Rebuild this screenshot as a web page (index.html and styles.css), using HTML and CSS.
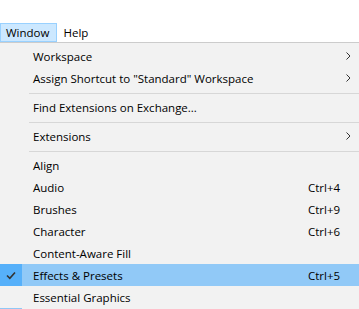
FILE: index.html
```html
<!DOCTYPE html>
<html lang="en">
<head>
  <meta charset="UTF-8" />
  <title>Window menu</title>
  <link rel="stylesheet" href="styles.css">
</head>
<body>
  <div class="menubar">
    <span class="menubar-item active">Window</span>
    <span class="menubar-item">Help</span>
  </div>

  <div class="menu">
    <div class="item"><span class="check"></span><span class="label">Workspace</span><span class="key"></span><span class="arrow"><svg width="5" height="8" viewBox="0 0 5 8"><polyline points="0.5,0.5 4,4 0.5,7.5" fill="none" stroke="#333" stroke-width="1"/></svg></span></div>
    <div class="item"><span class="check"></span><span class="label">Assign Shortcut to "Standard" Workspace</span><span class="key"></span><span class="arrow"><svg width="5" height="8" viewBox="0 0 5 8"><polyline points="0.5,0.5 4,4 0.5,7.5" fill="none" stroke="#333" stroke-width="1"/></svg></span></div>
    <div class="sep"></div>
    <div class="item"><span class="check"></span><span class="label">Find Extensions on Exchange...</span><span class="key"></span><span class="arrow"></span></div>
    <div class="sep"></div>
    <div class="item"><span class="check"></span><span class="label">Extensions</span><span class="key"></span><span class="arrow"><svg width="5" height="8" viewBox="0 0 5 8"><polyline points="0.5,0.5 4,4 0.5,7.5" fill="none" stroke="#333" stroke-width="1"/></svg></span></div>
    <div class="sep"></div>
    <div class="item"><span class="check"></span><span class="label">Align</span><span class="key"></span><span class="arrow"></span></div>
    <div class="item"><span class="check"></span><span class="label">Audio</span><span class="key">Ctrl+4</span><span class="arrow"></span></div>
    <div class="item"><span class="check"></span><span class="label">Brushes</span><span class="key">Ctrl+9</span><span class="arrow"></span></div>
    <div class="item"><span class="check"></span><span class="label">Character</span><span class="key">Ctrl+6</span><span class="arrow"></span></div>
    <div class="item"><span class="check"></span><span class="label">Content-Aware Fill</span><span class="key"></span><span class="arrow"></span></div>
    <div class="item hover checked"><span class="check"><svg width="10" height="9" viewBox="0 0 10 9"><polyline points="1,4.5 3.8,7.3 9,1.5" fill="none" stroke="#333" stroke-width="1.6"/></svg></span><span class="label">Effects &amp; Presets</span><span class="key">Ctrl+5</span><span class="arrow"></span></div>
    <div class="item"><span class="check"></span><span class="label">Essential Graphics</span><span class="key"></span><span class="arrow"></span></div>
    <div class="item checked"><span class="check"></span><span class="label"></span><span class="key"></span><span class="arrow"></span></div>
  </div>
</body>
</html>
```

FILE: styles.css
```css
body {
  margin: 0;
  background: #fff;
  font-family: "Open Sans", "Noto Sans", sans-serif;
  font-size: 11.5px;
  color: #000;
  overflow: hidden;
}
.menubar {
  margin-top: 23px;
  height: 19px;
  display: flex;
  align-items: stretch;
}
.menubar-item {
  padding: 0 7px 0 5px;
  line-height: 17px;
  border: 1px solid transparent;
}
.menubar-item.active {
  background: #cce8ff;
  border-color: #99d1ff;
}
.menu {
  border-top: 1px solid #cccccc;
  background: #f2f2f2;
  padding-top: 2px;
  height: 264px;
  overflow: hidden;
}
.item {
  display: flex;
  align-items: center;
  height: 22px;
}
.check {
  flex: none;
  width: 22px;
  height: 22px;
  margin-right: 11px;
  display: flex;
  align-items: center;
  justify-content: center;
}
.label {
  flex: 1;
  white-space: nowrap;
}
.key {
  width: 38px;
  white-space: nowrap;
}
.arrow {
  width: 13px;
  display: flex;
  align-items: center;
}
.item.hover {
  background: #91c9f7;
}
.item.checked .check {
  background: #90c8f6;
}
.item.hover.checked .check {
  background: #56b0fa;
}
.sep {
  height: 1px;
  background: #d7d7d7;
  margin: 4px 0 2px 29px;
}
```
